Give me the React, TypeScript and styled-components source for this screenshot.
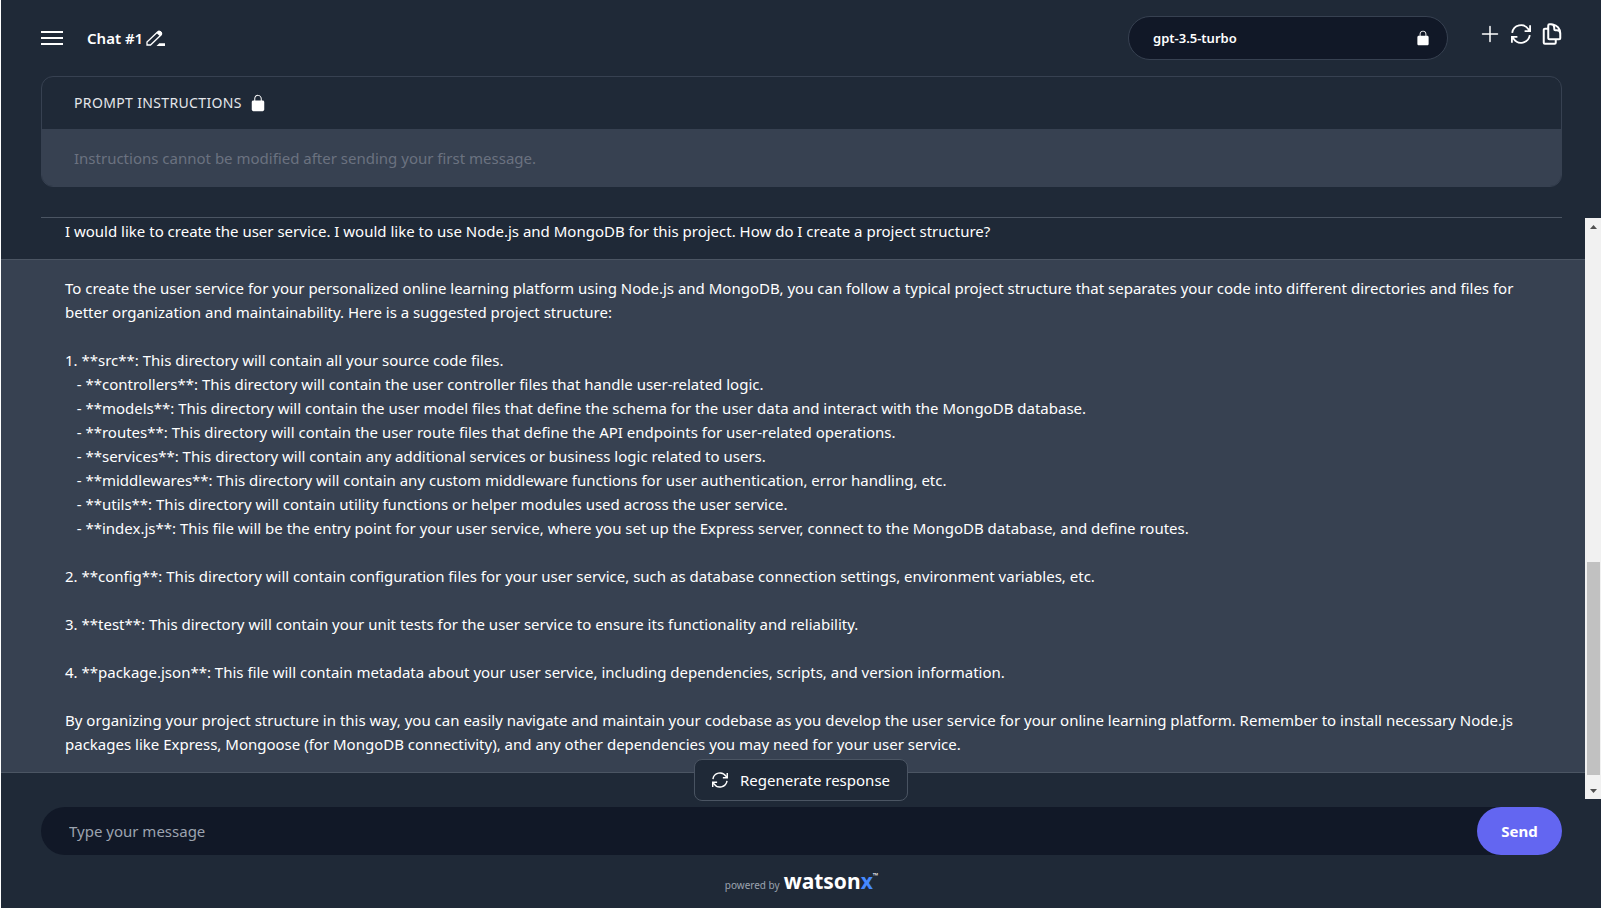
import React from "react";
import styled, { createGlobalStyle } from "styled-components";
import { HiOutlinePlus, HiOutlineDocumentDuplicate } from "react-icons/hi2";

const color = {
  page: "#1f2937",
  deep: "#111827",
  panel: "#374151",
  line: "#4b5563",
  muted: "#9ca3af",
  dim: "#6b7280",
  accent: "#6366f1",
};

const GlobalStyle = createGlobalStyle`
  *, *::before, *::after { box-sizing: border-box; }
  body { margin: 0; background: #fff; }
  body, button, input, select {
    font-family: "Noto Sans", "Open Sans", sans-serif;
    font-size: 15px;
    line-height: 24px;
    color: #fff;
  }
`;

const Page = styled.div`
  display: flex;
  flex-direction: column;
  height: 100vh;
  margin-left: 1px;
  background: ${color.page};
`;

const Header = styled.header`
  display: flex;
  align-items: flex-start;
  padding: 16px 37px 16px 40px;
`;

const IconButton = styled.button`
  display: flex;
  align-items: center;
  justify-content: center;
  padding: 0;
  border: 0;
  background: none;
  cursor: pointer;
`;

const TitleBar = styled.div`
  display: flex;
  flex: 1;
  align-items: center;
  height: 44px;
`;

const Title = styled.h1`
  margin: 0 3px 0 24px;
  font-size: 15px;
  font-weight: 600;
`;

const ModelPicker = styled.label`
  position: relative;
  flex: 0 1 320px;
  margin-right: 30px;
`;

const ModelSelect = styled.select`
  display: block;
  width: 100%;
  height: 44px;
  padding: 0 48px 0 24px;
  appearance: none;
  border: 1px solid ${color.panel};
  border-radius: 22px;
  background: ${color.deep};
  font-size: 13px;
  font-weight: 600;
  opacity: 1;
`;

const PickerLock = styled.span`
  position: absolute;
  top: 13px;
  right: 16px;
  display: flex;
`;

const Actions = styled.div`
  display: flex;
  gap: 7px;
  padding-top: 6px;
`;

const ActionButton = styled(IconButton)`
  width: 24px;
  height: 24px;
`;

const Instructions = styled.section`
  margin: 0 39px 0 40px;
  border: 1px solid ${color.panel};
  border-radius: 12px;
  overflow: hidden;
`;

const InstructionsHead = styled.label`
  display: flex;
  align-items: center;
  gap: 6px;
  height: 52px;
  padding: 0 32px;
  font-size: 14px;
  letter-spacing: 0.025em;
  color: #e5e7eb;
`;

const InstructionsField = styled.input`
  display: block;
  width: 100%;
  height: 57px;
  padding: 0 32px;
  border: 0;
  background: ${color.panel};
  &::placeholder { color: ${color.dim}; opacity: 1; }
`;

const Divider = styled.hr`
  width: auto;
  height: 1px;
  margin: 30px 39px 0 40px;
  border: 0;
  background: ${color.line};
`;

const Conversation = styled.main`
  display: flex;
  flex: 1;
  min-height: 0;
`;

const Messages = styled.div`
  flex: 1;
  min-width: 0;
  overflow: hidden;
`;

const UserMessage = styled.p`
  margin: 0;
  padding: 1px 64px 16px;
`;

const AssistantMessage = styled.article`
  padding: 16px 64px;
  border: solid ${color.line};
  border-width: 1px 0;
  background: ${color.panel};
  white-space: pre-wrap;
`;

const Scrollbar = styled.div`
  display: flex;
  flex-direction: column;
  width: 16px;
  background: #f1f1f1;
`;

const ScrollArrow = styled(IconButton)`
  height: 17px;
`;

const Track = styled.div`
  display: flex;
  flex: 1;
  flex-direction: column;
  padding: 0 1px 0 2px;
`;

const TrackGap = styled.div<{ $share: number }>`
  flex: ${(p) => p.$share};
`;

const Thumb = styled.div`
  flex: 213;
  background: #c1c1c1;
`;

const Composer = styled.footer`
  position: relative;
  padding: 8px 39px 0 40px;
`;

const Regenerate = styled.button`
  position: absolute;
  top: -40px;
  left: 50%;
  display: flex;
  align-items: center;
  gap: 12px;
  height: 42px;
  padding: 0 17px;
  transform: translateX(-50%);
  border: 1px solid ${color.line};
  border-radius: 8px;
  background: ${color.page};
  white-space: nowrap;
  cursor: pointer;
`;

const MessageForm = styled.form`
  display: flex;
  height: 48px;
  border-radius: 24px;
  background: ${color.deep};
`;

const MessageInput = styled.input`
  flex: 1;
  min-width: 0;
  padding: 0 28px;
  border: 0;
  border-radius: 24px;
  background: none;
  &::placeholder { color: ${color.muted}; opacity: 1; }
`;

const SendButton = styled.button`
  width: 85px;
  border: 0;
  border-radius: 24px;
  background: ${color.accent};
  font-weight: 700;
  cursor: pointer;
`;

const Credit = styled.div`
  display: flex;
  align-items: baseline;
  justify-content: center;
  gap: 4px;
  height: 53px;
  padding-top: 12px;
  font-size: 10px;
  color: ${color.muted};
`;

const Brand = styled.span`
  display: flex;
  font-size: 21px;
  line-height: 28px;
  font-weight: 700;
  color: #fff;
`;

const BrandX = styled.span`
  color: #4589ff;
`;

const Trademark = styled.span`
  font-size: 7px;
  line-height: 18px;
  font-weight: 400;
`;

const MenuIcon = () => (
  <svg width="22" height="16" viewBox="0 0 22 16" fill="#fff" aria-hidden="true">
    <path d="M0 1h22v2H0zM0 7h22v2H0zM0 13h22v2H0z" />
  </svg>
);

const PencilIcon = () => (
  <svg width="20" height="16" viewBox="0 0 20 16" fill="#fff" aria-hidden="true">
    <path
      d="M1 15V12L11.800 1.800A1.700 1.700 0 0 1 14.200 1.800L15 2.600A1.700 1.700 0 0 1 15 5L4.500 15Z"
      fill="none"
      stroke="#fff"
      strokeWidth="1.300"
    />
    <path d="M10.500 3L12.500 1H14.500L16 2.500V4.500L14 6.300z" />
    <path d="M10.500 16L13.300 13.300H19V16z" />
  </svg>
);

const LockIcon = ({ size }: { size: number }) => (
  <svg width={size} height={size} viewBox="0 0 512 512" fill="#fff" aria-hidden="true">
    <path d="M376 192h-24v-46.700c0-52.700-42-96.500-94.700-97.300-53.400-.7-97.300 42.800-97.300 96v48h-24c-22 0-40 18-40 40v192c0 22 18 40 40 40h240c22 0 40-18 40-40V232c0-22-18-40-40-40zm-50 0H186v-48.100c0-38.500 31-70.200 69.400-70.700 38.900-.5 70.600 31 70.600 70V192z" />
  </svg>
);

const RefreshIcon = ({ size }: { size: number }) => (
  <svg
    width={size}
    height={size}
    viewBox="0 0 20 20"
    fill="none"
    stroke="#fff"
    strokeWidth="1.8"
    aria-hidden="true"
  >
    <path d="M1.200 8.800A8.900 8.900 0 0 1 17.400 5.200L18.800 6.800M19.100 1.200V7.200H13.600" />
    <path d="M18.800 11.200A8.900 8.900 0 0 1 2.600 14.800L1.200 13.200M.9 18.800V12.800H6.400" />
  </svg>
);

const ArrowIcon = ({ down }: { down?: boolean }) => (
  <svg width="7" height="4" viewBox="0 0 7 4" fill="#505050" aria-hidden="true">
    <path d={down ? "M0 0h7L3.500 4z" : "M0 4h7L3.500 0z"} />
  </svg>
);

const question =
  "I would like to create the user service. I would like to use Node.js and MongoDB for this project. How do I create a project structure?";

const answer = `To create the user service for your personalized online learning platform using Node.js and MongoDB, you can follow a typical project structure that separates your code into different directories and files for better organization and maintainability. Here is a suggested project structure:

1. **src**: This directory will contain all your source code files.
   - **controllers**: This directory will contain the user controller files that handle user-related logic.
   - **models**: This directory will contain the user model files that define the schema for the user data and interact with the MongoDB database.
   - **routes**: This directory will contain the user route files that define the API endpoints for user-related operations.
   - **services**: This directory will contain any additional services or business logic related to users.
   - **middlewares**: This directory will contain any custom middleware functions for user authentication, error handling, etc.
   - **utils**: This directory will contain utility functions or helper modules used across the user service.
   - **index.js**: This file will be the entry point for your user service, where you set up the Express server, connect to the MongoDB database, and define routes.

2. **config**: This directory will contain configuration files for your user service, such as database connection settings, environment variables, etc.

3. **test**: This directory will contain your unit tests for the user service to ensure its functionality and reliability.

4. **package.json**: This file will contain metadata about your user service, including dependencies, scripts, and version information.

By organizing your project structure in this way, you can easily navigate and maintain your codebase as you develop the user service for your online learning platform. Remember to install necessary Node.js packages like Express, Mongoose (for MongoDB connectivity), and any other dependencies you may need for your user service.`;

export default function App() {
  return (
    <>
      <GlobalStyle />
      <Page>
        <Header>
          <TitleBar>
            <IconButton aria-label="Open menu">
              <MenuIcon />
            </IconButton>
            <Title>Chat #1</Title>
            <IconButton aria-label="Rename chat">
              <PencilIcon />
            </IconButton>
          </TitleBar>
          <ModelPicker>
            <ModelSelect aria-label="Model" disabled>
              <option>gpt-3.5-turbo</option>
            </ModelSelect>
            <PickerLock>
              <LockIcon size={18} />
            </PickerLock>
          </ModelPicker>
          <Actions>
            <ActionButton aria-label="New chat">
              <HiOutlinePlus size={24} color="#fff" />
            </ActionButton>
            <ActionButton aria-label="Reset chat">
              <RefreshIcon size={20} />
            </ActionButton>
            <ActionButton aria-label="Copy chat">
              <HiOutlineDocumentDuplicate size={24} color="#fff" strokeWidth={2} />
            </ActionButton>
          </Actions>
        </Header>

        <Instructions>
          <InstructionsHead htmlFor="instructions">
            PROMPT INSTRUCTIONS
            <LockIcon size={20} />
          </InstructionsHead>
          <InstructionsField
            id="instructions"
            disabled
            placeholder="Instructions cannot be modified after sending your first message."
          />
        </Instructions>
        <Divider />

        <Conversation>
          <Messages>
            <UserMessage>{question}</UserMessage>
            <AssistantMessage>{answer}</AssistantMessage>
          </Messages>
          <Scrollbar>
            <ScrollArrow aria-label="Scroll up">
              <ArrowIcon />
            </ScrollArrow>
            <Track>
              <TrackGap $share={327} />
              <Thumb />
              <TrackGap $share={7} />
            </Track>
            <ScrollArrow aria-label="Scroll down">
              <ArrowIcon down />
            </ScrollArrow>
          </Scrollbar>
        </Conversation>

        <Composer>
          <Regenerate>
            <RefreshIcon size={16} />
            Regenerate response
          </Regenerate>
          <MessageForm onSubmit={(e) => e.preventDefault()}>
            <MessageInput aria-label="Message" placeholder="Type your message" />
            <SendButton type="submit">Send</SendButton>
          </MessageForm>
          <Credit>
            powered by
            <Brand>
              watson<BrandX>x</BrandX>
              <Trademark>™</Trademark>
            </Brand>
          </Credit>
        </Composer>
      </Page>
    </>
  );
}
